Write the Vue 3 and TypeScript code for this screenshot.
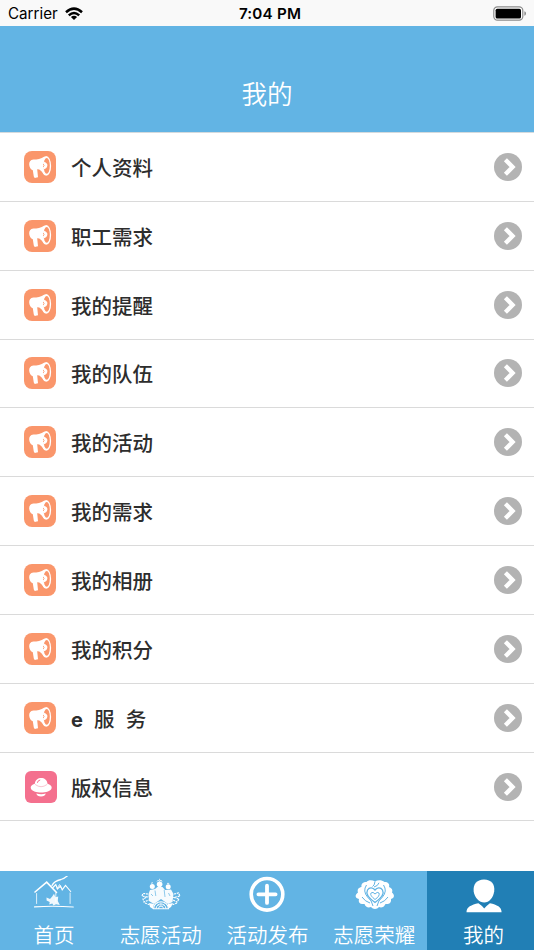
<script setup lang="ts">
interface MenuItem {
  label: string
  kind: 'horn' | 'saucer'
  spaced?: boolean
}

const items: MenuItem[] = [
  { label: '个人资料', kind: 'horn' },
  { label: '职工需求', kind: 'horn' },
  { label: '我的提醒', kind: 'horn' },
  { label: '我的队伍', kind: 'horn' },
  { label: '我的活动', kind: 'horn' },
  { label: '我的需求', kind: 'horn' },
  { label: '我的相册', kind: 'horn' },
  { label: '我的积分', kind: 'horn' },
  { label: 'e 服 务', kind: 'horn', spaced: true },
  { label: '版权信息', kind: 'saucer' },
]

const tabs = [
  { label: '首页', icon: 'home' },
  { label: '志愿活动', icon: 'people' },
  { label: '活动发布', icon: 'plus' },
  { label: '志愿荣耀', icon: 'flower' },
  { label: '我的', icon: 'user' },
]
const active = 'user'
</script>

<template>
  <div class="screen">
    <div class="status">
      <div class="carrier">
        <span>Carrier</span>
        <svg class="wifi" viewBox="0 0 18 14" width="18" height="14" fill="none" stroke="#000" stroke-width="2.5">
          <path d="M1 5.2Q9-2 17 5.2" />
          <path d="M3.8 8.4Q9 3.6 14.2 8.4" />
          <path d="M9 13L5.9 10Q9 7.4 12.1 10Z" fill="#000" stroke="none" />
        </svg>
      </div>
      <div class="time">7:04 PM</div>
      <svg class="battery" viewBox="0 0 34 16" width="34" height="16">
        <rect x=".8" y=".8" width="29" height="13.4" rx="3.6" fill="#fff" stroke="#8b8b8b" stroke-width="1.2" />
        <rect x="2.6" y="2.7" width="25.4" height="9.8" rx="1.6" fill="#000" />
        <path d="M31.4 5.2Q33 5.8 33 7.5T31.4 9.8Z" fill="#888" />
      </svg>
    </div>

    <header class="header"><h1>我的</h1></header>

    <main class="list">
      <div v-for="item in items" :key="item.label" class="row">
        <svg v-if="item.kind === 'horn'" class="icon" viewBox="0 0 32 32">
          <rect width="32" height="32" rx="8" fill="#fa966b" />
          <path d="M20.5 5.5C17 8 13 8.4 9.4 8.6C6.3 8.9 5 11 5.2 13.8C5.4 16.4 6.8 18.6 8.8 19.2L9.8 25.6Q10.2 27.2 11.6 26.8L14 26.2L13.2 18.3C15.6 18 17.6 20 20.2 23.6Z" fill="#fff" />
          <ellipse cx="22.2" cy="14.9" rx="4.9" ry="9.9" fill="#fff" />
          <ellipse cx="22.7" cy="14.8" rx="3.1" ry="7.9" fill="#fa966b" />
          <path d="M19.5 10.7Q23.6 11.6 23.4 14.5T19.5 18.4Q18.9 14.6 19.5 10.7Z" fill="#fff" />
          <path d="M19.2 13Q21 14.5 19.2 16" fill="none" stroke="#fa966b" stroke-width=".8" />
        </svg>
        <svg v-else class="icon saucer" viewBox="0 0 32 32">
          <rect width="32" height="32" rx="6" fill="#f4708e" />
          <path d="M9.8 12.8C10.4 5 22 5 22.5 12.8C25.3 13.7 26.8 15.2 26.7 16.8C26.4 20.3 20.5 21.6 16.2 21.6S6 20.2 5.7 16.8C5.6 15.2 7 13.7 9.8 12.8Z" fill="#fff" />
          <path d="M10.1 13.4Q16 18 22.2 13.4" fill="none" stroke="#f4a0b2" stroke-width=".6" />
          <path d="M12.4 11.8Q12.7 9.4 15.2 9" fill="none" stroke="#f4708e" stroke-width="1" />
          <path d="M11.3 22.6Q16.2 23.8 20.8 22.6Q20 25.6 16 25.6T11.3 22.6Z" fill="#fff" />
        </svg>
        <span class="label">
          <span v-if="item.spaced" class="spaced"><b>e</b> 服 务</span>
          <template v-else>{{ item.label }}</template>
        </span>
        <svg class="arrow" viewBox="0 0 28 28">
          <circle cx="14" cy="14" r="14" fill="#b3b3b3" />
          <path d="M11.4 6.8L18.6 14L11.4 21.2" fill="none" stroke="#fff" stroke-width="4.3" />
        </svg>
      </div>
    </main>

    <nav class="tabs">
      <div v-for="tab in tabs" :key="tab.icon" class="tab" :class="{ active: tab.icon === active }">
        <svg v-if="tab.icon === 'home'" class="glyph" viewBox="0 0 42 40" fill="none" stroke="#fff" stroke-linecap="round">
          <path d="M2 16L13.7 6.2L23.5 16.5" stroke-width="1.6" />
          <path d="M19 9.5Q21 5 28 3.5Q31.5 2.3 34.5-.3" stroke-width="1.3" />
          <path d="M20 11.5L22.8 8.5L24.4 13L27.5 10L29.2 13.8L32.5 9.4L37.7 15.5" stroke-width="1.1" />
          <path d="M24.3 12L26.5 8.5L28 11.5" stroke-width=".8" />
          <path d="M3.6 17.5V27.5M37.1 17V27.5M22.8 17V26" stroke-width=".8" />
          <path d="M1.5 30.9Q20 29.6 40.3 31" stroke-width="1.1" />
          <path d="M13.5 21.5L17 23L19.2 20.5L21 17.8L22.4 21.2L25.2 20.5L24.8 25L26.8 29L23 28.3L20.5 29.6L19.3 27.6L16.2 28.4L16.7 26L13.6 24.5Z" fill="#fff" fill-opacity=".9" stroke="none" />
        </svg>
        <svg v-else-if="tab.icon === 'people'" class="glyph" viewBox="0 0 42 40" fill="none" stroke="#fff">
          <g fill="#fff" stroke="none">
            <circle cx="12.3" cy="10.5" r="2.5" />
            <circle cx="19.6" cy="8.3" r="2.8" />
            <circle cx="28.2" cy="10.8" r="2.5" />
            <path d="M10 14L15 13L17.3 11H22.5L25 14L31 13.5L33.5 18L32.5 26L28 28L21 23L14 28L9 25L8.5 18Z" fill-opacity=".94" />
            <path d="M9 27L14 28L13 33L10 31ZM28 28L33 27L31 31L28 33Z" />
          </g>
          <path d="M15 14.5L15.8 20M24.2 14L25 21M11 18L13 20M28.5 17L30 20" stroke="#62b4e4" stroke-width=".7" />
          <path d="M17 5.5L18.3 4L19.6 5.5L21 4L22 5.7M19.6 2.8V4.5M11 7.3L13 6.7M27 7.4L29.2 7.4" stroke-width=".8" />
          <path d="M13.5 32.7C14 23.5 28 23.5 28.5 32.7Z" fill="#62b4e4" stroke-width="1.1" />
          <path d="M16 32.7C16.6 26.4 25.4 26.4 26 32.7M18.5 32.7C19 29.2 23 29.2 23.5 32.7" stroke-width="1" />
          <path d="M20.9 26V31M17.5 27.5L19.8 31M24.5 27.5L22 31" stroke-width=".5" />
          <path d="M8 18L3 17.5L2 20L7 21L3 23L4 26L9 24M5 27L10 29M34 18L38.5 17L40 20L34 21.5L39 23L37 26L33 24M37 27L32 29" stroke-width="1.2" stroke-dasharray="2 .8" />
        </svg>
        <svg v-else-if="tab.icon === 'plus'" class="glyph" viewBox="0 0 42 40" fill="none" stroke="#fff">
          <circle cx="21" cy="18.3" r="15.8" stroke-width="3.6" />
          <path d="M21 9.7V26.9M12.4 18.3H29.6" stroke-width="3.8" stroke-linecap="round" />
        </svg>
        <svg v-else-if="tab.icon === 'flower'" class="glyph flower" viewBox="0 0 42 40" fill="none">
          <path d="M21 5.5C24 3.5 28 4 30.5 6C34 6 36 8 35 11C38 12 39 14 38 16.5C41 19 40.5 22 37 23C37.5 27 35 28.5 31.5 28C30 31.5 27 32 25 31C23 33.5 19 33.5 17 31C14 32 11.5 31 10.5 28C6.5 28.5 4 27 5 23C1 22 .5 19 4 16.5C3 13.5 4.5 11.5 7.5 11C7 7.5 9 6 12.5 6C14 4 18 3.5 21 5.5Z" fill="#fff" />
          <g stroke="#62b4e4" stroke-width="1">
            <path d="M21 26.5C16 23 11 18.5 13.5 14C15.5 10.8 19 11.5 21 14C23 11.5 26.5 10.8 28.5 14C31 18.5 26 23 21 26.5Z" stroke-width="1.3" />
            <path d="M21 23.5C18 21 15.8 18.8 17 17Q19 15.3 21 18Q23.4 15.3 25 17Q26.2 20 21 23.5Z" />
            <path d="M18.5 10.5Q20.5 9.8 21 5.5M20 11Q24 10 25 6.8" />
            <path d="M12.5 9Q8.5 15 13.5 21Q18 24.5 19 30M29.5 9Q33.5 15 28.5 21Q24 24.5 23 30" />
            <path d="M8 21Q11 25.5 16 27M34 21Q31 25.5 26 27" />
          </g>
        </svg>
        <svg v-else class="glyph" viewBox="0 0 42 40" fill="#fff">
          <path d="M21 3.4C28.5 3.4 32 8.4 31.2 15.2C30.4 21.7 26 26.5 21.2 26.5S11.5 21.8 10.7 15.2C9.9 8.4 13.6 3.4 21 3.4Z" />
          <path d="M3.5 36.2C3.4 30.8 8.4 28.8 15.4 27.2Q19 29.6 21.2 32.4Q23.7 29.6 26.9 27.2C34 28.8 38.7 30.8 38.6 36.2Z" />
        </svg>
        <span class="tab-label">{{ tab.label }}</span>
      </div>
    </nav>
  </div>
</template>

<style>
body {
  margin: 0;
  background: #fff;
}
</style>

<style scoped>
.screen {
  width: 534px;
  height: 950px;
  display: flex;
  flex-direction: column;
  overflow: hidden;
  background: #fff;
  font-family: "Noto Sans CJK SC", sans-serif;
}
.status {
  flex: none;
  height: 26px;
  box-sizing: border-box;
  padding: 1px 7px 0 8px;
  display: grid;
  grid-template-columns: 1fr auto 1fr;
  align-items: center;
  background: #f9f9f9;
  color: #000;
  font: 15.2px/26px Inter, sans-serif;
}
.carrier {
  display: flex;
  align-items: center;
  gap: 7px;
}
.time {
  padding-left: 5px;
  font-weight: 600;
  letter-spacing: 0.2px;
}
.battery {
  justify-self: end;
}
.header {
  flex: none;
  height: 106px;
  box-sizing: border-box;
  padding-top: 48px;
  background: #62b4e4;
  text-align: center;
}
h1 {
  margin: 0;
  color: #fff;
  font-size: 25.6px;
  line-height: 38px;
  font-weight: 350;
}
.list {
  flex: 1;
  box-sizing: border-box;
  border-top: 1px solid #d4dadd;
}
.row {
  height: 68.85px;
  box-sizing: border-box;
  padding: 0 12px 0 24px;
  display: flex;
  align-items: center;
  border-bottom: 1px solid #dadada;
}
.icon {
  width: 32px;
  height: 32px;
}
.saucer {
  margin-left: 1px;
  margin-right: -1px;
}
.label {
  flex: 1;
  margin-left: 15px;
  color: #2d2d2d;
  font-size: 20.5px;
  line-height: 30px;
  font-weight: 500;
}
.spaced {
  word-spacing: 6.5px;
}
.spaced b {
  font-family: Inter, sans-serif;
  font-weight: 700;
  font-size: 20px;
  line-height: 1;
}
.arrow {
  width: 28px;
  height: 28px;
}
.tabs {
  flex: none;
  height: 79px;
  display: grid;
  grid-template-columns: repeat(5, 1fr);
  background: #62b4e4;
}
.tab {
  display: flex;
  flex-direction: column;
  align-items: center;
  padding: 5px 0 0 1px;
}
.active {
  padding-left: 6px;
  background: #217fb5;
}
.glyph {
  width: 42px;
  height: 40px;
}
.flower {
  margin-left: 2px;
}
.tab-label {
  margin-top: 3px;
  color: #fff;
  font-size: 20.5px;
  line-height: 30px;
  font-weight: 350;
  white-space: nowrap;
}
</style>
